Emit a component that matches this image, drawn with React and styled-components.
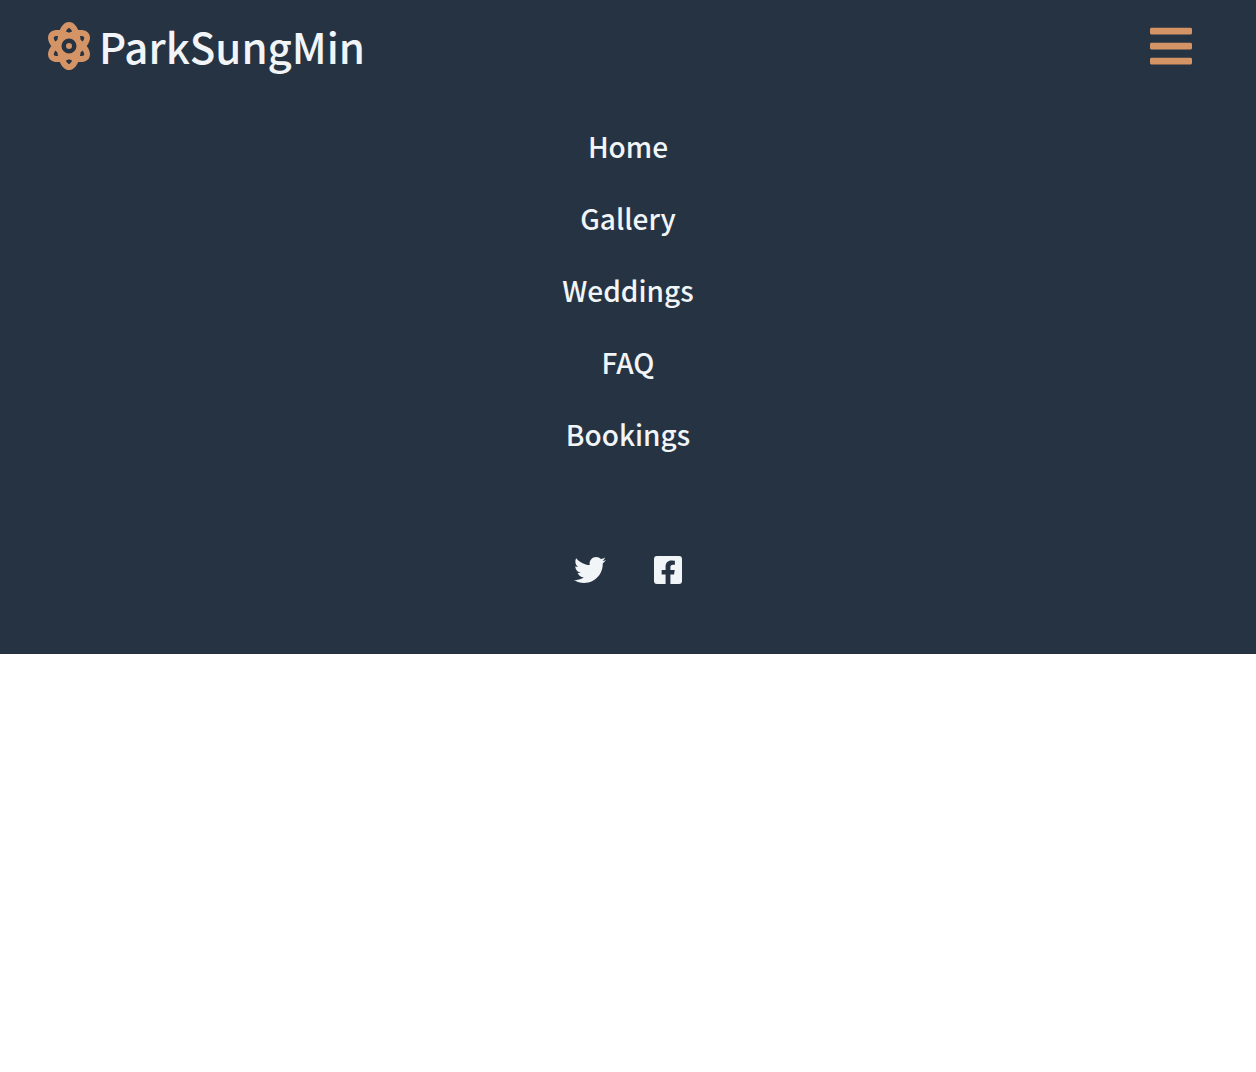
import React from "react";
import styled, { createGlobalStyle } from "styled-components";
import { FaAtom, FaBars, FaTwitter, FaFacebookSquare } from "react-icons/fa";

const GlobalStyle = createGlobalStyle`
  * { box-sizing: border-box; margin: 0; padding: 0; }
  body {
    background: #ffffff;
    font-family: "Noto Sans CJK KR", "Noto Sans", sans-serif;
    font-weight: 500;
  }
`;

const Nav = styled.nav`
  background: #263343;
  color: #f1f5f8;
  border-bottom: 1px solid #242f3e;
`;

const TopBar = styled.div`
  display: flex;
  justify-content: space-between;
  align-items: center;
  height: 92px;
  padding: 0 64px 0 48px;
`;

const Logo = styled.a`
  display: flex;
  align-items: center;
  gap: 9px;
  color: inherit;
  font-size: 42px;
  line-height: 72px;
  text-decoration: none;

  svg {
    width: 42px;
    height: 48px;
    color: #d49466;
  }
`;

const MenuButton = styled.button`
  display: flex;
  border: 0;
  background: none;
  color: #d49466;
  cursor: pointer;

  svg {
    width: 42px;
    height: 48px;
  }
`;

const Menu = styled.ul`
  list-style: none;
  display: flex;
  flex-direction: column;
  align-items: center;
  padding: 18px 0 64px;
`;

const MenuLink = styled.a`
  display: block;
  color: inherit;
  font-size: 28px;
  line-height: 48px;
  padding: 12px;
  text-decoration: none;
`;

const Socials = styled.ul`
  list-style: none;
  display: flex;
  justify-content: center;
  gap: 48px;
  padding: 20px 0 67px;
`;

const SocialLink = styled.a`
  display: flex;
  color: inherit;

  svg {
    width: ${({ $width }) => $width}px;
    height: 32px;
  }
`;

const items = ["Home", "Gallery", "Weddings", "FAQ", "Bookings"];

export default function App() {
  return (
    <>
      <GlobalStyle />
      <Nav>
        <TopBar>
          <Logo href="#">
            <FaAtom aria-hidden="true" />
            <span>ParkSungMin</span>
          </Logo>
          <MenuButton type="button" aria-label="Toggle menu">
            <FaBars aria-hidden="true" />
          </MenuButton>
        </TopBar>
        <Menu>
          {items.map((item) => (
            <li key={item}>
              <MenuLink href="#">{item}</MenuLink>
            </li>
          ))}
        </Menu>
        <Socials>
          <li>
            <SocialLink href="#" aria-label="Twitter" $width={32}>
              <FaTwitter aria-hidden="true" />
            </SocialLink>
          </li>
          <li>
            <SocialLink href="#" aria-label="Facebook" $width={28}>
              <FaFacebookSquare aria-hidden="true" />
            </SocialLink>
          </li>
        </Socials>
      </Nav>
    </>
  );
}
